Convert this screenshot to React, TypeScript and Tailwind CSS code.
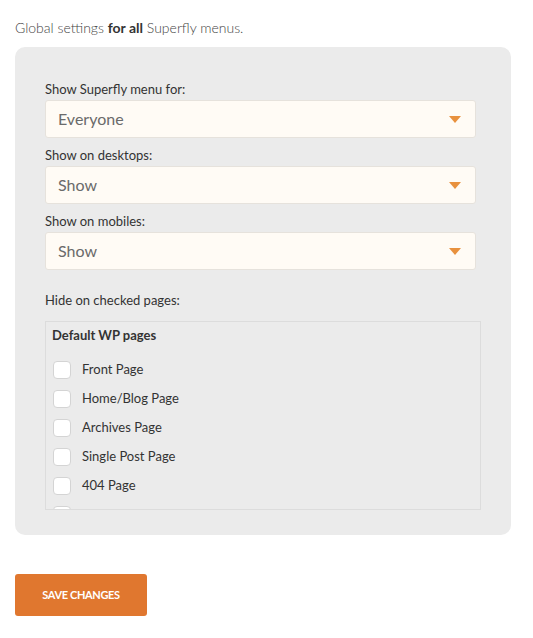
import React from 'react';

const FIELDS = [
  { label: 'Show Superfly menu for:', value: 'Everyone' },
  { label: 'Show on desktops:', value: 'Show' },
  { label: 'Show on mobiles:', value: 'Show' },
];

const PAGES = ['Front Page', 'Home/Blog Page', 'Archives Page', 'Single Post Page', '404 Page', 'Search Page'];

function Select({ value }: { value: string }) {
  return (
    <div className="w-[431px] h-[38px] flex items-center justify-between pl-[12px] pr-[10px] bg-[#fffbf5] border border-[#e6e2dc] rounded-[3px]">
      <span className="text-[16px] text-[#6a6a6a]">{value}</span>
      <svg width="12" height="7" viewBox="0 0 12 7" className="mr-[4px]">
        <path d="M0 0 H12 L6 7 Z" fill="#e8913e" />
      </svg>
    </div>
  );
}

export default function App() {
  return (
    <div className="min-h-screen bg-white px-[15px] pt-[20px] text-[#333]" style={{ fontFamily: 'Lato, "Open Sans", sans-serif' }}>
      <p className="text-[14px] leading-[16px] font-light text-[#444]">
        Global settings <b className="font-bold text-[#333]">for all</b> Superfly menus.
      </p>

      <div className="mt-[11px] w-[496px] bg-[#ebebeb] rounded-[10px] pt-[34px] pb-[25px] px-[30px]">
        {FIELDS.map((f, i) => (
          <div key={f.label} className={i > 0 ? 'mt-[9px]' : ''}>
            <div className="text-[13px] leading-[16px] mb-[3px] text-[#333]">{f.label}</div>
            <Select value={f.value} />
          </div>
        ))}

        <div className="mt-[22px] text-[13px] leading-[16px] text-[#333]">Hide on checked pages:</div>

        <div className="mt-[13px] h-[189px] overflow-hidden border border-[#dcdcdc] pl-[6px] pt-[5px]">
          <div className="text-[13px] leading-[16px] font-bold text-[#333]">Default WP pages</div>
          <div className="mt-[18px] flex flex-col gap-[11px] pl-[1px]">
            {PAGES.map((p) => (
              <label key={p} className="flex items-center gap-[11px] h-[18px]">
                <span className="w-[18px] h-[18px] bg-white border border-[#d4d4d4] rounded-[4px] shrink-0" />
                <span className="text-[13px] text-[#333]">{p}</span>
              </label>
            ))}
          </div>
        </div>
      </div>

      <button className="mt-[39px] w-[132px] h-[42px] bg-[#e0772f] rounded-[3px] text-white text-[11px] font-bold tracking-[-0.35px]">
        SAVE CHANGES
      </button>
    </div>
  );
}
